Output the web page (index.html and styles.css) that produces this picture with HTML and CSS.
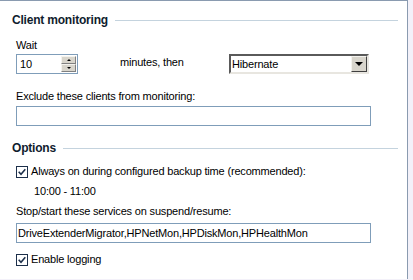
FILE: index.html
```html
<!DOCTYPE html>
<html lang="en">
  <head>
    <meta charset="UTF-8" />
    <meta name="viewport" content="width=device-width, initial-scale=1.0" />
    <title>Power Management Settings</title>
    <link rel="stylesheet" href="styles.css">
  </head>
  <body>
    <div class="panel">
      <div class="section-title"><span>Client monitoring</span><i class="rule"></i></div>
      <div class="group">
        <div class="label wait-label">Wait</div>
        <div class="wait-row">
          <div class="spinner">
            <span class="spinner-value">10</span>
            <div class="spin-buttons">
              <span class="spin spin-up"></span>
              <span class="spin spin-down"></span>
            </div>
          </div>
          <span class="then">minutes, then</span>
          <div class="select">
            <span class="select-value">Hibernate</span>
            <span class="select-arrow"></span>
          </div>
        </div>
        <div class="label exclude-label">Exclude these clients from monitoring:</div>
        <input class="textbox exclude-box" type="text" value="" />
      </div>

      <div class="section-title options-title"><span>Options</span><i class="rule"></i></div>
      <div class="group">
        <label class="check-row always-row">
          <svg class="checkbox" width="12" height="12" viewBox="0 0 12 12">
            <rect x="0.5" y="0.5" width="11" height="11" fill="#fff" stroke="#1c2f4a" />
            <path d="M2.7 5.8 L5 8.2 L9.3 3.3" fill="none" stroke="#1c2f4a" stroke-width="1.6" />
          </svg>
          <span>Always on during configured backup time (recommended):</span>
        </label>
        <div class="label time">10:00 - 11:00</div>
        <div class="label services-label">Stop/start these services on suspend/resume:</div>
        <input class="textbox services-box" type="text" value="DriveExtenderMigrator,HPNetMon,HPDiskMon,HPHealthMon" />
        <label class="check-row logging-row">
          <svg class="checkbox" width="12" height="12" viewBox="0 0 12 12">
            <rect x="0.5" y="0.5" width="11" height="11" fill="#fff" stroke="#1c2f4a" />
            <path d="M2.7 5.8 L5 8.2 L9.3 3.3" fill="none" stroke="#1c2f4a" stroke-width="1.6" />
          </svg>
          <span>Enable logging</span>
        </label>
      </div>
    </div>
  </body>
</html>
```

FILE: styles.css
```css
body {
    margin: 0;
    width: 413px;
    height: 280px;
    overflow: hidden;
    background-color: #f3f1f9;
    font-family: "Liberation Sans", Arial, sans-serif;
    font-size: 11px;
    line-height: 13px;
    letter-spacing: -0.18px;
    color: #000;
}
.panel {
    width: 408px;
    height: 279px;
    padding-top: 12px;
    box-sizing: border-box;
    background-color: #fff;
    border-top: 1px solid #8a9bb0;
    border-right: 1px solid #8a9bb0;
}
.section-title {
    display: flex;
    align-items: center;
    gap: 7px;
    height: 14px;
    padding: 0 9px 0 12px;
    font-size: 12px;
    line-height: 14px;
    font-weight: bold;
    letter-spacing: -0.2px;
    color: #101c2e;
}
.rule {
    flex: 1;
    height: 1px;
    background-color: #c4d3de;
}
.options-title {
    margin-top: 15px;
}
.group {
    padding-left: 16px;
}
.label {
    height: 13px;
}
.wait-label {
    margin-top: 12px;
}
.wait-row {
    display: flex;
    align-items: center;
    margin-top: 2px;
    height: 20px;
}
.spinner {
    display: flex;
    width: 62px;
    height: 20px;
    box-sizing: border-box;
    border: 1px solid #7f9db9;
    padding: 1px;
    margin-right: 42px;
}
.spinner-value {
    flex: 1;
    padding-left: 2px;
    line-height: 16px;
}
.spin-buttons {
    display: flex;
    flex-direction: column;
    width: 15px;
}
.spin {
    flex: 1;
    display: flex;
    align-items: center;
    justify-content: center;
    background-color: #d8d5cc;
    border: 1px solid;
    border-color: #f4f3ee #808080 #808080 #f4f3ee;
}
.spin::after {
    content: "";
    border-left: 2px solid transparent;
    border-right: 2px solid transparent;
}
.spin-up::after {
    border-bottom: 2px solid #000;
}
.spin-down::after {
    border-top: 2px solid #000;
}
.then {
    width: 109px;
    padding-bottom: 3px;
}
.select {
    display: flex;
    align-items: center;
    width: 140px;
    height: 20px;
    box-sizing: border-box;
    border: 2px solid;
    border-color: #5a5a5a #e8e6e0 #e8e6e0 #5a5a5a;
    background-color: #fff;
}
.select-value {
    flex: 1;
    padding-left: 1px;
}
.select-arrow {
    display: flex;
    align-items: center;
    justify-content: center;
    width: 16px;
    height: 16px;
    box-sizing: border-box;
    background-color: #d8d5cc;
    border: 1px solid;
    border-color: #f4f3ee #404040 #404040 #f4f3ee;
}
.select-arrow::after {
    content: "";
    border-left: 4px solid transparent;
    border-right: 4px solid transparent;
    border-top: 4px solid #000;
}
.exclude-label {
    margin-top: 16px;
}
.textbox {
    display: block;
    width: 355px;
    height: 20px;
    box-sizing: border-box;
    margin: 3px 0 0;
    padding: 0 1px;
    border: 1px solid #7f9db9;
    font-family: "Liberation Sans", Arial, sans-serif;
    font-size: 11px;
    letter-spacing: -0.18px;
    color: #000;
    outline: none;
}
.check-row {
    display: flex;
    align-items: center;
    gap: 3px;
    height: 13px;
    margin-top: 10px;
}
.checkbox {
    flex-shrink: 0;
}
.time {
    margin-top: 7px;
    padding-left: 18px;
}
.services-label {
    margin-top: 7px;
}
.services-box {
    margin-top: 5px;
}
```
